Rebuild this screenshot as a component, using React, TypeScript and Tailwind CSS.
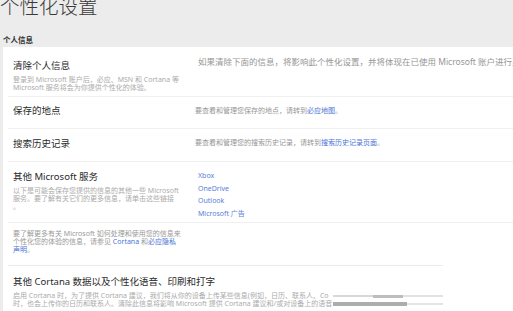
import React from "react";

const font = { fontFamily: '"Noto Sans", "Noto Sans CJK SC", sans-serif' };

function Link({ children }: { children: React.ReactNode }) {
  return <span className="text-[#4a74d8]">{children}</span>;
}

export default function App() {
  return (
    <div className="w-[513px] h-[311px] overflow-hidden bg-[#ececec]" style={font}>
      <div className="h-[33px] overflow-hidden">
        <div className="mt-[-4px] text-[19.5px] leading-[22px] font-light text-[#3a3a3a]">
          个性化设置
        </div>
      </div>
      <div className="h-[14px] pl-[3px] text-[7.5px] leading-[14px] font-bold text-[#333]">个人信息</div>
      <div className="ml-[3px] w-[520px] h-[300px] bg-white">
        {/* Row 1 */}
        <div className="mx-[5px] h-[50px] border-b border-[#f0f0f0] flex">
          <div className="w-[190px] shrink-0 pl-[5px] pt-[13px]">
            <div className="text-[9.5px] leading-[12px] text-[#2a2a2a]">清除个人信息</div>
            <div className="mt-[4px] text-[7px] leading-[8px] text-[#ababab] whitespace-nowrap">
              登录到 Microsoft 账户后，必应、MSN 和 Cortana 等
              <br />
              Microsoft 服务将会为你提供个性化的体验。
            </div>
          </div>
          <div className="pt-[10px] text-[8.5px] leading-[10px] text-[#969696] whitespace-nowrap">
            如果清除下面的信息，将影响此个性化设置，并将体现在已使用 Microsoft 账户进行身份验证的所有设备上。
          </div>
        </div>
        {/* Row 2 */}
        <div className="mx-[5px] h-[32px] border-b border-[#f0f0f0] flex">
          <div className="w-[187px] shrink-0 pl-[5px] pt-[8px]">
            <div className="text-[9.5px] leading-[12px] text-[#2a2a2a]">保存的地点</div>
          </div>
          <div className="pt-[10px] text-[7px] leading-[8px] text-[#969696] whitespace-nowrap">
            要查看和管理您保存的地点，请转到<Link>必应地图</Link>。
          </div>
        </div>
        {/* Row 3 */}
        <div className="mx-[5px] h-[33px] border-b border-[#f0f0f0] flex">
          <div className="w-[187px] shrink-0 pl-[5px] pt-[9px]">
            <div className="text-[9.5px] leading-[12px] text-[#2a2a2a]">搜索历史记录</div>
          </div>
          <div className="pt-[10px] text-[7px] leading-[8px] text-[#969696] whitespace-nowrap">
            要查看和管理您的搜索历史记录，请转到<Link>搜索历史记录页面</Link>。
          </div>
        </div>
        {/* Row 4 */}
        <div className="mx-[5px] h-[61px] border-b border-[#f0f0f0] flex">
          <div className="w-[190px] shrink-0 pl-[5px] pt-[9px]">
            <div className="text-[9.5px] leading-[12px] text-[#2a2a2a]">其他 Microsoft 服务</div>
            <div className="mt-[4px] text-[7px] leading-[8px] text-[#ababab] whitespace-nowrap">
              以下是可能会保存您提供的信息的其他一些 Microsoft
              <br />
              服务。要了解有关它们的更多信息，请单击这些链接
              <br />。
            </div>
          </div>
          <div className="pt-[8px] flex flex-col text-[7px] leading-[12.5px] text-[#5a80d8] whitespace-nowrap">
            <span>Xbox</span>
            <span>OneDrive</span>
            <span>Outlook</span>
            <span>Microsoft 广告</span>
          </div>
        </div>
        {/* Row 5 */}
        <div className="mx-[5px] w-[435px] h-[43px] border-b border-[#ececec]">
          <div className="pl-[5px] pt-[7px] text-[7px] leading-[8px] text-[#9a9a9a] whitespace-nowrap">
            要了解更多有关 Microsoft 如何处理和使用您的信息来
            <br />
            个性化您的体验的信息，请参见 <Link>Cortana</Link> 和<Link>必应隐私</Link>
            <br />
            <Link>声明</Link>。
          </div>
        </div>
        {/* Row 6 */}
        <div className="mx-[5px] w-[435px]">
          <div className="pl-[5px] pt-[10px]">
            <div className="text-[9.5px] leading-[12px] text-[#2a2a2a] whitespace-nowrap">
              其他 Cortana 数据以及个性化语音、印刷和打字
            </div>
            <div className="mt-[4px] text-[7px] leading-[8px] text-[#ababab]">
              <div className="flex items-center">
                <div className="w-[320px] shrink-0 overflow-hidden whitespace-nowrap">
                  启用 Cortana 时，为了提供 Cortana 建议，我们将从你的设备上传某些信息(例如，日历、联系人、Co
                </div>
                <div className="flex items-center h-[8px]">
                  <div className="w-[40px] h-[2px] bg-[#d8d8d8]" />
                  <div className="w-[30px] h-[3px] bg-[#bdbdbd]" />
                  <div className="w-[40px] h-[2px] bg-[#e2e2e2]" />
                </div>
              </div>
              <div className="flex items-center">
                <div className="w-[320px] shrink-0 overflow-hidden whitespace-nowrap">
                  时，也会上传你的日历和联系人。清除此信息将影响 Microsoft 提供 Cortana 建议和/或对设备上的语音
                </div>
                <div className="flex items-center h-[8px]">
                  <div className="w-[74px] h-[4px] bg-[#adadad]" />
                  <div className="w-[36px] h-[2px] bg-[#e4e4e4]" />
                </div>
              </div>
            </div>
          </div>
        </div>
      </div>
    </div>
  );
}
